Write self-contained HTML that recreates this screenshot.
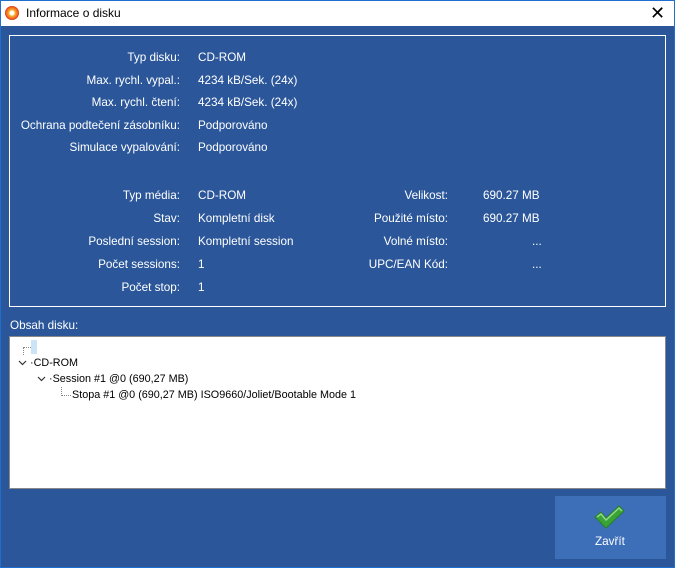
<!DOCTYPE html>
<html><head><style>
*{margin:0;padding:0;box-sizing:border-box}
body{width:675px;height:568px;overflow:hidden;background:#2b579a;font-family:"Liberation Sans",sans-serif;font-size:11.7px;position:relative}
.frame{position:absolute;left:0;top:0;width:675px;height:568px;border:1px solid #1f6fd1}
.title{position:absolute;left:1px;top:1px;width:673px;height:25px;background:#fff;color:#000}
.title span{position:absolute;left:25px;top:5px;font-size:12px}
.ico{position:absolute;left:4px;top:5px;width:14px;height:14px;border-radius:50%;background:radial-gradient(circle,#fff 0 2px,#f7b733 3px,#f05a1a 6px,#d0321a 7px)}
.x{position:absolute;left:649px;top:2px;font-size:18px;color:#000}
.panel{position:absolute;left:9px;top:35px;width:657px;height:272px;border:1px solid #fff}
.t{position:absolute;color:#fff;white-space:nowrap;line-height:14px;margin-top:1px}
.r{text-align:right}
.tree{position:absolute;left:9px;top:336px;width:657px;height:153px;background:#fff;border:1px solid #888;font-size:10.8px}
.tt{position:absolute;color:#000;white-space:nowrap;margin-top:1px}
.btn{position:absolute;left:555px;top:496px;width:111px;height:63px;background:#3d6eb8}
</style></head><body>
<div class="frame"></div>
<div class="title"><div class="ico"></div><span>Informace o disku</span><div class="x">✕</div></div>
<div class="panel"></div>
<div class="t r" style="right:495px;top:50px">Typ disku:</div><div class="t" style="left:198px;top:50px">CD-ROM</div>
<div class="t r" style="right:495px;top:73px">Max. rychl. vypal.:</div><div class="t" style="left:198px;top:73px">4234 kB/Sek. (24x)</div>
<div class="t r" style="right:495px;top:95px">Max. rychl. čtení:</div><div class="t" style="left:198px;top:95px">4234 kB/Sek. (24x)</div>
<div class="t r" style="right:495px;top:118px">Ochrana podtečení zásobníku:</div><div class="t" style="left:198px;top:118px">Podporováno</div>
<div class="t r" style="right:495px;top:140px">Simulace vypalování:</div><div class="t" style="left:198px;top:140px">Podporováno</div>
<div class="t r" style="right:495px;top:188px">Typ média:</div><div class="t" style="left:198px;top:188px">CD-ROM</div>
<div class="t r" style="right:495px;top:211px">Stav:</div><div class="t" style="left:198px;top:211px">Kompletní disk</div>
<div class="t r" style="right:495px;top:234px">Poslední session:</div><div class="t" style="left:198px;top:234px">Kompletní session</div>
<div class="t r" style="right:495px;top:257px">Počet sessions:</div><div class="t" style="left:198px;top:257px">1</div>
<div class="t r" style="right:495px;top:280px">Počet stop:</div><div class="t" style="left:198px;top:280px">1</div>
<div class="t r" style="right:227px;top:188px">Velikost:</div><div class="t" style="left:483px;top:188px">690.27 MB</div>
<div class="t r" style="right:227px;top:211px">Použité místo:</div><div class="t" style="left:483px;top:211px">690.27 MB</div>
<div class="t r" style="right:227px;top:234px">Volné místo:</div><div class="t" style="left:532px;top:234px">...</div>
<div class="t r" style="right:227px;top:257px">UPC/EAN Kód:</div><div class="t" style="left:532px;top:257px">...</div>
<div class="t" style="left:10px;top:318px">Obsah disku:</div>
<div class="tree">
<div style="position:absolute;left:13px;top:10px;width:8px;height:8px;border-left:1px dotted #888;border-top:1px dotted #888"></div>
<div style="position:absolute;left:21px;top:3px;width:6px;height:14px;background:#cce4f7"></div>
<svg style="position:absolute;left:8px;top:23px" width="9" height="6"><path d="M1 1 L4.5 4.5 L8 1" fill="none" stroke="#333" stroke-width="1.2"/></svg>
<div class="tt" style="left:20px;top:19px">·CD-ROM</div>
<svg style="position:absolute;left:27px;top:39px" width="9" height="6"><path d="M1 1 L4.5 4.5 L8 1" fill="none" stroke="#333" stroke-width="1.2"/></svg>
<div class="tt" style="left:39px;top:35px">·Session #1 @0 (690,27 MB)</div>
<div style="position:absolute;left:51px;top:50px;width:10px;height:9px;border-left:1px dotted #888;border-bottom:1px dotted #888"></div>
<div class="tt" style="left:62px;top:51px">Stopa #1 @0 (690,27 MB) ISO9660/Joliet/Bootable Mode 1</div>
</div>
<div class="btn">
<svg style="position:absolute;left:38px;top:8px" width="32" height="26" viewBox="0 0 32 26"><path d="M2 13 L8 8 L13 14 L26 2 L31 7 L13 24 Z" fill="#3aa336" stroke="#2a7f28" stroke-width="1"/><path d="M4 13 L8 10 L13 16 L26 4 L29 7" fill="none" stroke="#8fd88a" stroke-width="1.5"/></svg>
<div class="t" style="left:40px;top:38px">Zavřít</div>
</div>
</body></html>
